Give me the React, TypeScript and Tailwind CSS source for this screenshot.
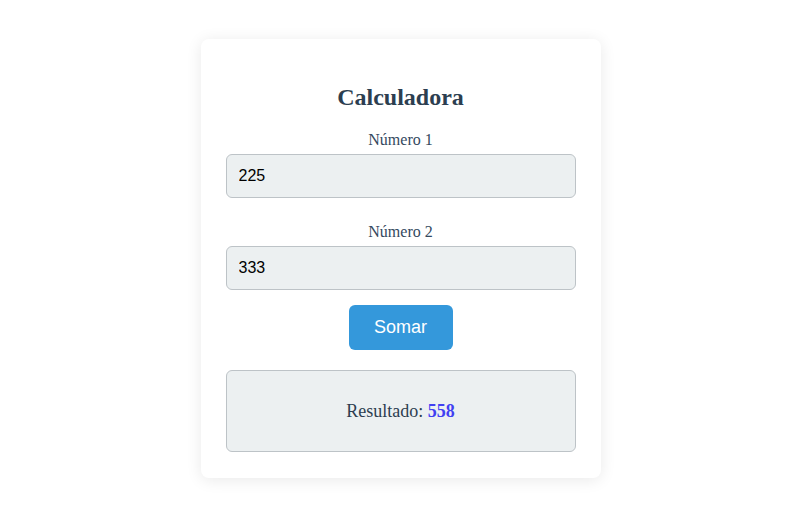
import React, { useState } from 'react'

const serif = "font-['Liberation_Serif','Times_New_Roman',serif]"
const sans = "font-['Liberation_Sans',Arial,sans-serif]"

const App = () => {
    const [a, setA] = useState('225')
    const [b, setB] = useState('333')
    const [result, setResult] = useState<number | null>(558)

    return (
        <div className="min-h-[524px] w-full bg-white flex justify-center items-start pt-[39px] pl-[4px]">
            <div className={`w-[400px] bg-white rounded-lg shadow-[0_2px_16px_rgba(0,0,0,0.09)] px-[25px] pt-[25px] pb-[26px] text-center text-[#2c3e50] ${serif}`}>
                <h2 className="mt-[20px] mb-[20px] text-[24px] font-bold leading-[27px]">Calculadora</h2>

                {/* Fields */}
                <label className="block text-[16px] leading-[18px] mb-[5px] text-[#34495e]">Número 1</label>
                <input
                    value={a}
                    onChange={(e) => setA(e.target.value)}
                    className={`block w-full h-[44px] px-[12px] rounded-md border border-[#bdc3c7] bg-[#ecf0f1] text-black text-[16px] outline-none mb-[25px] ${sans}`}
                />

                <label className="block text-[16px] leading-[18px] mb-[5px] text-[#34495e]">Número 2</label>
                <input
                    value={b}
                    onChange={(e) => setB(e.target.value)}
                    className={`block w-full h-[44px] px-[12px] rounded-md border border-[#bdc3c7] bg-[#ecf0f1] text-black text-[16px] outline-none mb-[15px] ${sans}`}
                />

                <button
                    onClick={() => setResult(Number(a) + Number(b))}
                    className={`h-[45px] w-[104px] rounded-md bg-[#3498db] text-white text-[18px] ${sans}`}
                >
                    Somar
                </button>

                {/* Result */}
                <div className="mt-[20px] h-[82px] rounded-md border border-[#bdc3c7] bg-[#ecf0f1] flex items-center justify-center text-[18px]">
                    <span>
                        Resultado: <span className="font-bold text-[#4141f2]">{result}</span>
                    </span>
                </div>
            </div>
        </div>
    )
}

export default App
